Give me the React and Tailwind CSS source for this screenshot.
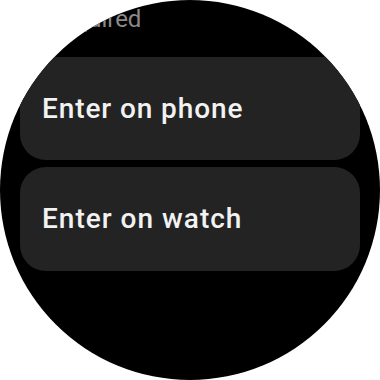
export default function App() {
  return (
    <div className="w-[380px] h-[380px] bg-white">
      <div
        className="w-[380px] h-[380px] rounded-full bg-black overflow-hidden flex flex-col px-[20px]"
        style={{ fontFamily: "Roboto, 'Noto Sans', sans-serif" }}
      >
        <div className="mt-[5px] h-[28px] leading-[28px] text-[24px] text-[#8a8a8a] whitespace-nowrap pl-[27px]">
          Required
        </div>
        <div className="mt-[24px] flex flex-col gap-[7px]">
          <div className="h-[103px] rounded-[26px] bg-[#232323] flex items-center pl-[22px]">
            <span className="text-[28px] font-medium text-[#f2f2f2] leading-none tracking-[0.9px]">Enter on phone</span>
          </div>
          <div className="h-[104px] rounded-[26px] bg-[#232323] flex items-center pl-[22px]">
            <span className="text-[28px] font-medium text-[#f2f2f2] leading-none tracking-[1px]">Enter on watch</span>
          </div>
        </div>
      </div>
    </div>
  );
}
